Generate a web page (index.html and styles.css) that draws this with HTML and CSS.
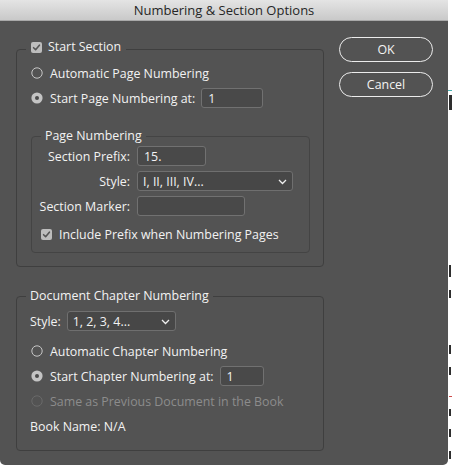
FILE: index.html
```html
<!DOCTYPE html>
<html lang="en">
<head>
<meta charset="utf-8">
<title>Numbering &amp; Section Options</title>
<link rel="stylesheet" href="styles.css">
</head>
<body>
<div class="screen">
  <div class="dialog">
    <div class="titlebar">Numbering &amp; Section Options</div>
    <div class="dbody">
      <div class="main">
        <fieldset class="group g-section">
          <legend class="legend legend-check"><span class="lg"><span class="check"><svg width="11" height="11" viewBox="0 0 11 11"><path d="M2.6 5.7 L4.6 7.7 L8.4 3.2" fill="none" stroke="#555" stroke-width="1.6" stroke-linecap="round" stroke-linejoin="round"/></svg></span>Start Section</span></legend>
          <div class="gbody gb-section">
            <div class="rows">
              <div class="row"><svg class="radio" width="12" height="12" viewBox="0 0 12 12"><circle cx="6" cy="6" r="5.2" fill="none" stroke="#c6c6c6" stroke-width="1"/></svg>Automatic Page Numbering</div>
              <div class="row"><svg class="radio" width="12" height="12" viewBox="0 0 12 12"><circle cx="6" cy="6" r="5.6" fill="#c4c4c4"/><circle cx="6" cy="6" r="2" fill="#4b4b4b"/></svg>Start Page Numbering at:<span class="field f-start">1</span></div>
            </div>
            <fieldset class="group g-inner">
              <legend class="legend"><span class="lg">Page Numbering</span></legend>
              <div class="gbody gb-inner">
                <div class="form">
                  <span class="lbl">Section Prefix:</span><span class="field f-prefix">15.</span>
                  <span class="lbl">Style:</span><span class="select s-roman"><span>I, II, III, IV...</span><svg class="chev" width="9" height="6" viewBox="0 0 9 6"><path d="M1 1 L4.5 4.5 L8 1" fill="none" stroke="#eeeeee" stroke-width="1.3"/></svg></span>
                  <span class="lbl">Section Marker:</span><span class="field f-marker"></span>
                </div>
                <div class="row checkrow"><span class="check"><svg width="11" height="11" viewBox="0 0 11 11"><path d="M2.6 5.7 L4.6 7.7 L8.4 3.2" fill="none" stroke="#555" stroke-width="1.6" stroke-linecap="round" stroke-linejoin="round"/></svg></span>Include Prefix when Numbering Pages</div>
              </div>
            </fieldset>
          </div>
        </fieldset>

        <fieldset class="group g-chapter">
          <legend class="legend"><span class="lg">Document Chapter Numbering</span></legend>
          <div class="gbody gb-chapter">
            <div class="row stylerow"><span class="lbl-inline">Style:</span><span class="select s-arabic"><span>1, 2, 3, 4...</span><svg class="chev" width="9" height="6" viewBox="0 0 9 6"><path d="M1 1 L4.5 4.5 L8 1" fill="none" stroke="#eeeeee" stroke-width="1.3"/></svg></span></div>
            <div class="row r-indent"><svg class="radio" width="12" height="12" viewBox="0 0 12 12"><circle cx="6" cy="6" r="5.2" fill="none" stroke="#c6c6c6" stroke-width="1"/></svg>Automatic Chapter Numbering</div>
            <div class="row r-indent"><svg class="radio" width="12" height="12" viewBox="0 0 12 12"><circle cx="6" cy="6" r="5.6" fill="#c4c4c4"/><circle cx="6" cy="6" r="2" fill="#4b4b4b"/></svg>Start Chapter Numbering at:<span class="field f-chapter">1</span></div>
            <div class="row r-indent disabled"><svg class="radio" width="12" height="12" viewBox="0 0 12 12"><circle cx="6" cy="6" r="5.2" fill="none" stroke="#6a6a6a" stroke-width="1"/></svg>Same as Previous Document in the Book</div>
            <div class="row">Book Name: N/A</div>
          </div>
        </fieldset>
      </div>

      <div class="buttons">
        <div class="btn">OK</div>
        <div class="btn">Cancel</div>
      </div>
    </div>
  </div>
  <div class="behind">
    <span class="mk mk-teal"></span>
    <span class="mk mk-y"></span>
    <span class="mk mk-a"></span>
    <span class="mk mk-b"></span>
    <span class="mk mk-c"></span>
    <span class="mk mk-d"></span>
    <span class="mk mk-red"></span>
    <span class="mk mk-e"></span>
    <span class="mk mk-f"></span>
    <span class="mk mk-g"></span>
  </div>
</div>
</body>
</html>
```
FILE: styles.css
```css
* { box-sizing: border-box; }
html, body { margin: 0; padding: 0; }
body {
  background: #ffffff;
  width: 452px;
  height: 469px;
  overflow: hidden;
  font-family: "Open Sans", "Noto Sans", sans-serif;
}
.screen { display: flex; align-items: flex-start; }

.dialog {
  width: 448px;
  height: 465px;
  flex: none;
  background: #535353;
  border-radius: 0 0 5px 5px;
  color: #f2f2f2;
  font-size: 12.4px;
  display: flex;
  flex-direction: column;
}
.titlebar {
  height: 21px;
  line-height: 20px;
  text-align: center;
  font-size: 13px;
  color: #262626;
  background: linear-gradient(#e4e4e4, #c9c9c9);
  border-bottom: 1px solid #a9a9a9;
}
.dbody {
  display: flex;
  align-items: flex-start;
  gap: 15px;
  padding: 16px 0 0 16px;
}
.main { width: 308px; display: flex; flex-direction: column; }

/* group boxes */
.group {
  margin: 0;
  padding: 0;
  min-width: 0;
  border: 1px solid #3f3f3f;
  border-radius: 4px;
}
.legend {
  margin-left: 9px;
  padding: 0 4px;
  line-height: 16px;
}
.lg { display: flex; align-items: center; height: 16px; white-space: nowrap; }
.legend-check { padding: 0 5px 4px; }
.legend-check .check { margin-right: 6px; }

.g-section { margin-top: 2px; }
.gb-section { padding: 4px 13px 13px 14px; }
.rows { display: flex; flex-direction: column; gap: 5px; }

.g-inner { margin-top: 20px; border-color: #444444; }
.gb-inner { padding: 2px 0 8px 9px; }

.g-chapter { margin-top: 21px; }
.gb-chapter {
  padding: 7px 13px 14px 13px;
  display: flex;
  flex-direction: column;
  gap: 5px;
}
.stylerow { margin-bottom: 5px; }
.r-indent { padding-left: 1px; }

/* rows & controls */
.row { display: flex; align-items: center; height: 20px; white-space: nowrap; }
.radio { flex: none; margin-right: 7px; }
.disabled { color: #8c8c8c; }

.check {
  flex: none;
  width: 11px;
  height: 11px;
  border-radius: 2px;
  background: #bdbdbd;
  display: flex;
}
.checkrow { margin-top: 8px; }
.checkrow .check { margin-right: 7px; }

.field {
  display: flex;
  align-items: center;
  height: 20px;
  padding-left: 6px;
  background: #494949;
  border: 1px solid #717171;
  border-radius: 3px;
  color: #f4f4f4;
}
.f-start { width: 62px; margin-left: 6px; }
.f-chapter { width: 44px; margin-left: 6px; }
.f-prefix { width: 69px; }
.f-marker { width: 108px; }

.select {
  display: flex;
  align-items: center;
  justify-content: space-between;
  height: 20px;
  padding: 0 5px 0 5px;
  background: #474747;
  border: 1px solid #6f6f6f;
  border-radius: 3px;
}
.s-roman { width: 156px; }
.s-arabic { width: 109px; }
.chev { flex: none; margin-top: 1px; }
.lbl-inline { margin-right: 6px; }

.form {
  display: grid;
  grid-template-columns: 89px auto;
  grid-auto-rows: 20px;
  column-gap: 7px;
  row-gap: 5px;
  justify-items: start;
  align-items: center;
}
.lbl { justify-self: end; white-space: nowrap; }

/* buttons */
.buttons { display: flex; flex-direction: column; gap: 10px; }
.btn {
  width: 94px;
  height: 25px;
  border: 1.5px solid #ececec;
  border-radius: 13px;
  display: flex;
  align-items: center;
  justify-content: center;
  color: #f4f4f4;
}

/* document peeking out behind the dialog */
.behind { display: flex; flex-direction: column; width: 4px; }
.mk { display: block; background: #2e2e2e; width: 2px; margin-left: 1px; }
.mk-teal { margin-top: 90px; height: 1px; width: 4px; margin-left: 0; background: #46b3b3; }
.mk-y { margin-top: 4px; height: 15px; width: 3px; }
.mk-a { margin-top: 155px; height: 12px; }
.mk-b { margin-top: 13px; height: 8px; }
.mk-c { margin-top: 47px; height: 9px; }
.mk-d { margin-top: 13px; height: 8px; }
.mk-red { margin-top: 21px; height: 1px; width: 3px; background: #d04a4a; }
.mk-e { margin-top: 12px; height: 7px; }
.mk-f { margin-top: 13px; height: 8px; }
.mk-g { margin-top: 14px; height: 8px; }
```
